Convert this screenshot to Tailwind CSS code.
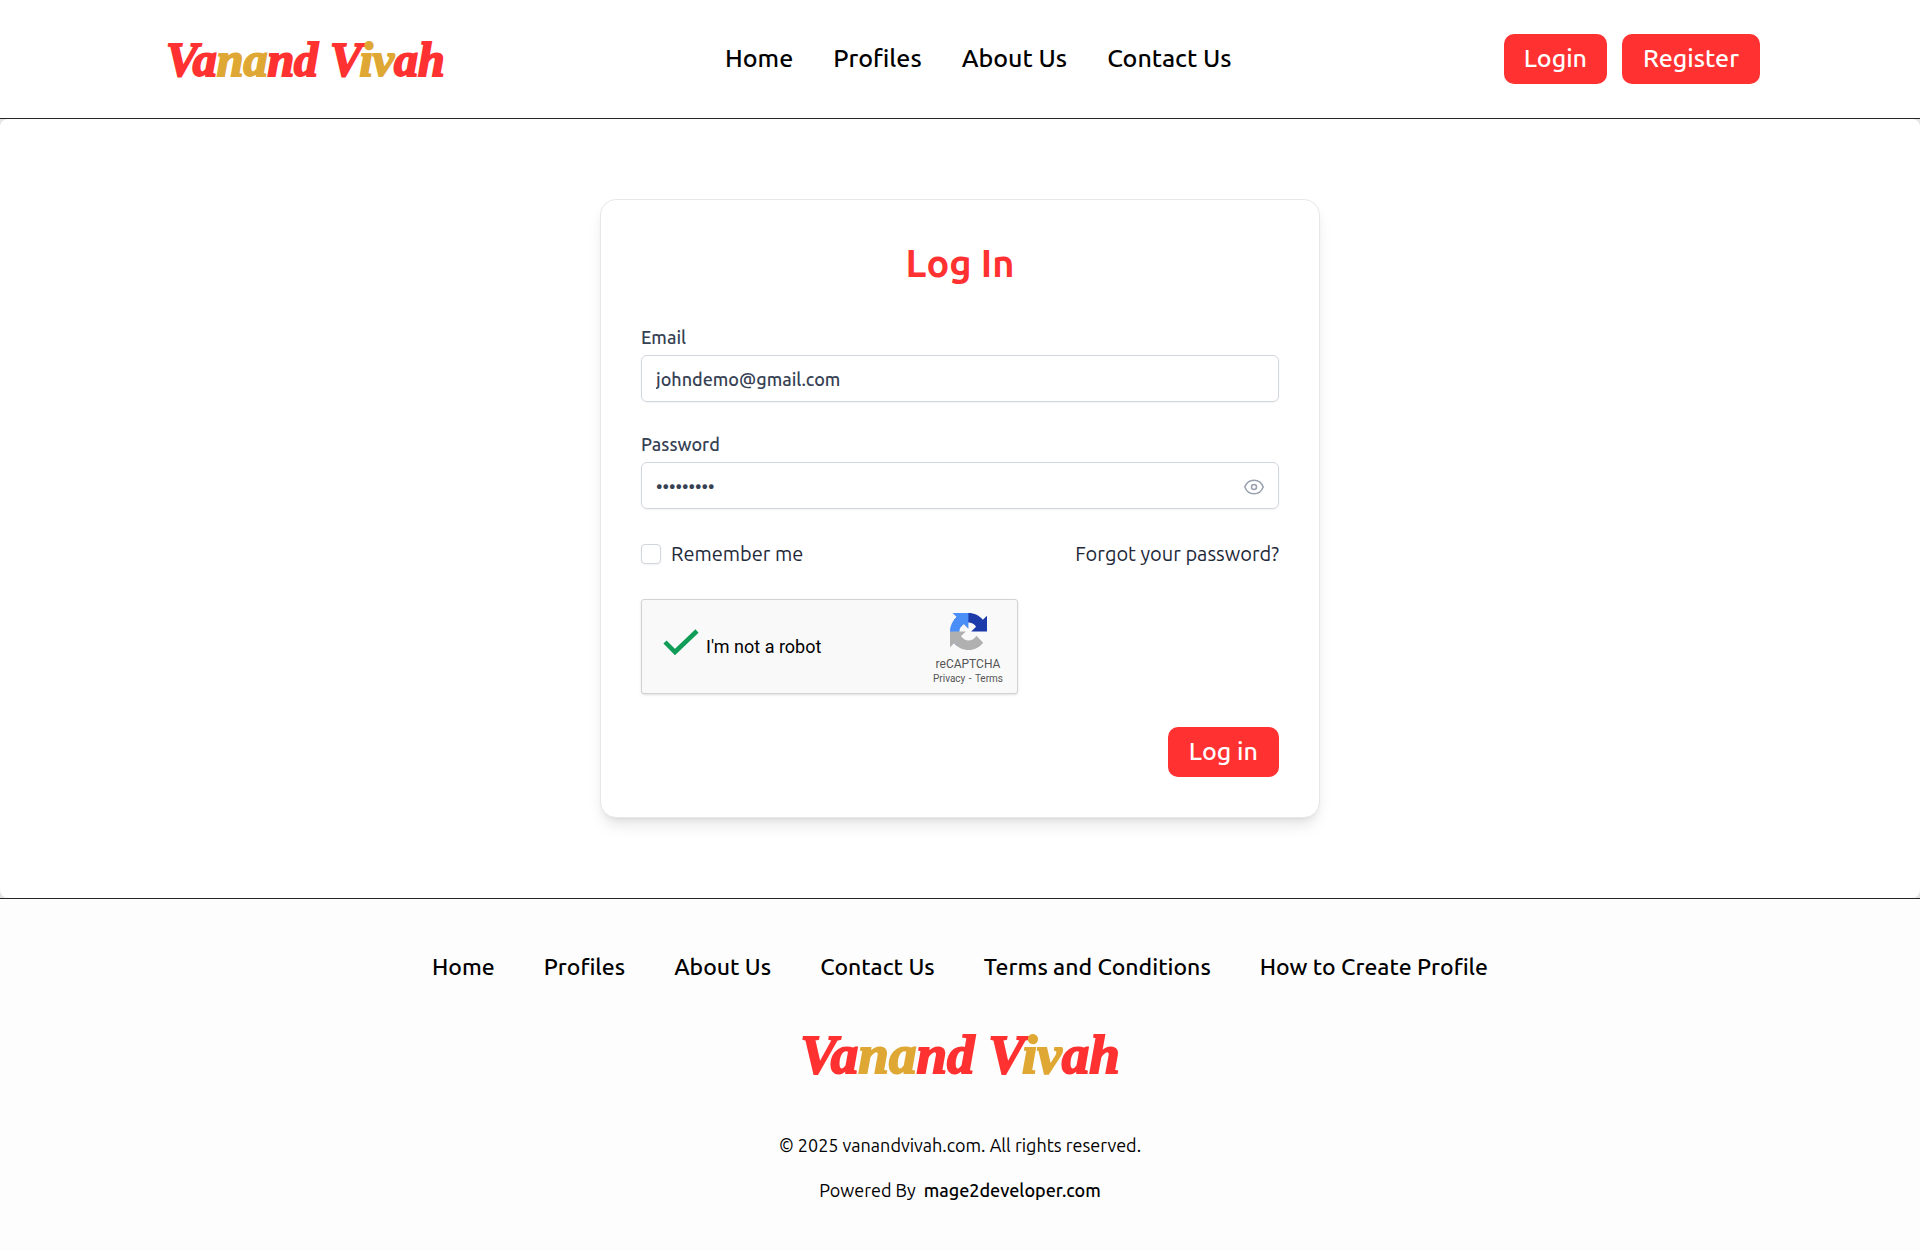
<!DOCTYPE html>
<html lang="en">
<head>
<meta charset="utf-8">
<meta name="viewport" content="width=device-width, initial-scale=1">
<title>Log In - Vanand Vivah</title>
<script src="https://cdn.jsdelivr.net/npm/@tailwindcss/browser@4"></script>
</head>
<body class="flex min-h-screen flex-col bg-[#fdfdfd] font-['Ubuntu','Noto_Sans',sans-serif] text-black">
<header class="border-b border-[#27272a] bg-white">
  <div class="mx-auto flex max-w-[1600px] items-center justify-between py-[34px]">
    <a href="#" class="w-[293px] pt-0.5 pl-1.5 font-['Liberation_Serif',serif] text-5xl leading-[48px] font-bold whitespace-nowrap italic text-[#ff3131] [-webkit-text-stroke:2px]">Va<span class="text-[#dfa834]">na</span>nd V<span class="text-[#dfa834]">iv</span>ah</a>
    <nav class="flex gap-10 pb-0.5 text-[25px] leading-8 font-medium" aria-label="Main">
      <a href="#">Home</a>
      <a href="#">Profiles</a>
      <a href="#">About Us</a>
      <a href="#">Contact Us</a>
    </nav>
    <div class="flex gap-[15px] text-[25px] font-medium text-white">
      <button type="button" class="h-[50px] rounded-[10px] bg-[#ff3131] px-5">Login</button>
      <button type="button" class="h-[50px] rounded-[10px] bg-[#ff3131] px-[21px]">Register</button>
    </div>
  </div>
</header>

<div class="bg-[#e5e5e5]">
<main class="rounded-lg bg-white py-20">
  <form class="mx-auto flex max-w-[720px] flex-col rounded-2xl border border-gray-200 bg-white p-10 shadow-lg">
    <h1 class="mt-[3px] text-center text-[38px] leading-[40px] font-bold text-[#ff3131]">Log In</h1>
    <label for="email" class="mt-[42px] text-lg leading-6 font-medium text-gray-700">Email</label>
    <input id="email" type="email" value="johndemo@gmail.com" class="mt-1.5 h-[47px] w-full rounded-md border border-gray-300 px-3.5 text-lg font-medium text-gray-700 shadow-xs">
    <label for="password" class="mt-[30px] text-lg leading-6 font-medium text-gray-700">Password</label>
    <div class="relative mt-1.5">
      <input id="password" type="password" value="johndemo1" class="block h-[47px] w-full rounded-md border border-gray-300 px-3.5 text-lg font-medium text-gray-700 shadow-xs">
      <button type="button" aria-label="Show password" class="absolute inset-y-0 right-[15px] flex items-center">
        <svg class="size-5 text-gray-400" viewBox="0 0 20 20" fill="none" stroke="currentColor" stroke-width="1.5"><path d="M.8 11C2.300 7 5.500 4.200 10 4.200s7.700 2.800 9.200 6.800c-1.500 4-4.700 6.800-9.200 6.800S2.300 15 .8 11z"/><circle cx="10" cy="11" r="2.500"/></svg>
      </button>
    </div>
    <div class="mt-[31px] flex items-center justify-between text-xl leading-7 text-gray-800">
      <label class="flex items-center gap-2.5"><input type="checkbox" class="size-5 appearance-none rounded border border-gray-300 bg-white shadow-xs">Remember me</label>
      <a href="#">Forgot your password?</a>
    </div>
    <div class="mt-[31px] flex h-[95px] w-[377px] items-center rounded-[3px] border border-[#d3d3d3] bg-[#f9f9f9] pr-3.5 pl-5 font-['Roboto',sans-serif] shadow-sm">
      <svg class="h-9 w-10" viewBox="0 0 40 36" fill="none" stroke="#0f9d58" stroke-width="4.500"><path d="M3 13l10 10L35 2"/></svg>
      <span class="pl-1 text-lg">I'm not a robot</span>
      <div class="ml-auto flex flex-col items-center pt-1.5 text-[#555]">
        <svg class="size-[37px]" viewBox="0 0 64 64"><path fill="#1c3aa9" d="M64 31.955l-.033-1.370V4.687l-7.160 7.160C50.948 4.674 42.033.093 32.050.093c-10.400 0-19.622 4.960-25.458 12.640l11.736 11.860a15.550 15.550 0 0 1 4.754-5.334c2.050-1.600 4.952-2.906 8.968-2.906.485 0 .860.057 1.135.163 4.976.393 9.288 3.140 11.828 7.124l-8.307 8.307L64 31.953"/><path fill="#4a8ff7" d="M31.862.094l-1.370.033H4.594l7.160 7.160C4.580 13.147 0 22.060 0 32.046c0 10.400 4.960 19.622 12.640 25.458L24.500 45.768a15.550 15.550 0 0 1-5.334-4.754c-1.600-2.050-2.906-4.952-2.906-8.968 0-.485.057-.860.163-1.135.393-4.976 3.140-9.288 7.124-11.828l8.307 8.307L31.860.095"/><path fill="#b0b0b0" d="M.001 32.045l.033 1.370v25.898l7.160-7.160c5.860 7.173 14.774 11.754 24.760 11.754 10.400 0 19.622-4.960 25.458-12.640l-11.736-11.860a15.550 15.550 0 0 1-4.754 5.334c-2.050 1.600-4.952 2.906-8.968 2.906-.485 0-.860-.057-1.135-.163-4.976-.393-9.288-3.140-11.828-7.124l8.307-8.307L0 32.045"/></svg>
        <span class="mt-1.5 text-[12px] leading-4">reCAPTCHA</span>
        <span class="text-[10px] leading-[14px]"><a href="#">Privacy</a> <span class="px-px">-</span> <a href="#">Terms</a></span>
      </div>
    </div>
    <button type="submit" class="mt-[33px] h-[50px] self-end rounded-[10px] bg-[#ff3131] px-[21px] text-[25px] font-medium text-white">Log in</button>
  </form>
</main>
</div>

<footer class="flex flex-col items-center border-t border-[#27272a] pt-[52px]">
  <nav class="flex flex-wrap gap-[49px] text-[23px] leading-8 font-medium" aria-label="Footer">
    <a href="#">Home</a>
    <a href="#">Profiles</a>
    <a href="#">About Us</a>
    <a href="#">Contact Us</a>
    <a href="#">Terms and Conditions</a>
    <a href="#">How to Create Profile</a>
  </nav>
  <a href="#" class="mt-10 font-['Liberation_Serif',serif] text-[55px] leading-[64px] font-bold italic text-[#ff3131] [-webkit-text-stroke:2px]">Va<span class="text-[#dfa834]">na</span>nd V<span class="text-[#dfa834]">iv</span>ah</a>
  <p class="mt-11 text-lg leading-7">© 2025 vanandvivah.com. All rights reserved.</p>
  <p class="mt-[17px] flex gap-2 text-lg leading-7">Powered By <a href="#" class="font-medium">mage2developer.com</a></p>
</footer>
</body>
</html>
